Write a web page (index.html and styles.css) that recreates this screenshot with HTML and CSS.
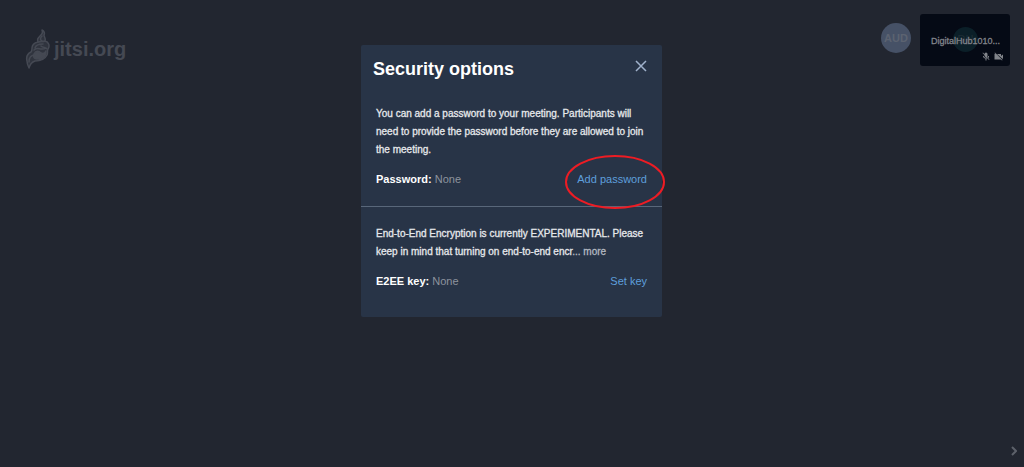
FILE: index.html
```html
<!DOCTYPE html>
<html lang="en">
<head>
    <meta charset="UTF-8">
    <meta name="viewport" content="width=device-width, initial-scale=1.0">
    <title>Jitsi Meet</title>
    <link rel="stylesheet" href="styles.css">
</head>
<body>
    <header class="topbar">
        <a class="logo" href="#">
            <svg class="logo-mark" viewBox="0 0 28 40" fill="none" stroke="currentColor" stroke-width="1.500" stroke-linejoin="round" stroke-linecap="round">
                <path fill="#30343e" d="M18 1c1 3 0 4-2 6-2 2-3 3-2 6-4 1-6 3-6 6 0 2 0 3-1 4-4 2-5 5-4 9 0 3 1 5 2 7 1-4 3-6 6-7 6 0 10-2 12-6 1-2 0-4 1-6 2-3 1-7-3-8 1-3-1-4-1-6 1-2 0-4-2-5z"/>
                <path d="M18 7c-2 2-2 4 0 5M14 13c3-1 5 0 7-1M11 19c1-4 5-4 8-4M10 21c4-4 6 1 12-2M17 17c2 2 5 1 6 3M5 33c0-5 2-7 6-7M22 24c-1 4-3 6-7 7"/>
                <path fill="currentColor" d="M10 25c2-4 5-3 7-1 2 1 4 0 5-2-1 5-5 8-9 8-3 0-4-2-3-5z"/>
            </svg>
            <span>jitsi.org</span>
        </a>
        <div class="participants">
            <div class="avatar">AUD</div>
            <div class="thumbnail">
                <div class="thumbnail-avatar">DH</div>
                <div class="thumbnail-name">DigitalHub1010...</div>
                <div class="thumbnail-status">
                    <svg width="8" height="9" viewBox="0 0 16 18" fill="currentColor">
                        <path d="M5 4a3 3 0 0 1 6 0v5l-1 1-5-5zM12 8h2c0 2 0 3-1 4l-1-1zM1 2l1-1 13 14-1 1-4-4-1 1v4H7v-4c-3 0-5-2-5-5h2c0 3 3 4 5 3L7 10 5 8V6z"/>
                    </svg>
                    <svg width="9" height="9" viewBox="0 0 18 18" fill="currentColor">
                        <path d="M6 4h8v4l4-3v9l-3-2zM1 2l1-1 15 15-1 1-2-2H1V4h2z"/>
                    </svg>
                </div>
            </div>
        </div>
    </header>

    <div class="overlay">
        <section class="dialog" role="dialog" aria-labelledby="dialog-title">
            <div class="dialog-header">
                <h1 id="dialog-title">Security options</h1>
                <button class="close" aria-label="Close">
                    <svg width="12" height="12" viewBox="0 0 12 12" fill="none" stroke="currentColor" stroke-width="1.500">
                        <path d="M1 1l10 10M11 1L1 11"/>
                    </svg>
                </button>
            </div>
            <div class="section">
                <p>You can add a password to your meeting. Participants will need to provide the password before they are allowed to join the meeting.</p>
                <div class="row">
                    <div><strong>Password:</strong> <span class="value">None</span></div>
                    <div class="action">
                        <a href="#">Add password</a>
                        <svg class="highlight" viewBox="0 0 100 56" fill="none" stroke="#ed1c24" stroke-width="2">
                            <ellipse cx="50" cy="28" rx="49" ry="26"/>
                        </svg>
                    </div>
                </div>
            </div>
            <div class="section">
                <p>End-to-End Encryption is currently EXPERIMENTAL. Please keep in mind that turning on end-to-end encr<span class="more">... more</span></p>
                <div class="row">
                    <div><strong>E2EE key:</strong> <span class="value">None</span></div>
                    <a href="#">Set key</a>
                </div>
            </div>
        </section>
    </div>

    <footer class="bottombar">
        <button class="filmstrip-toggle" aria-label="Toggle filmstrip">
            <svg width="6" height="10" viewBox="0 0 6 10" fill="none" stroke="currentColor" stroke-width="2">
                <path d="M1 1l4 4-4 4"/>
            </svg>
        </button>
    </footer>
</body>
</html>
```
FILE: styles.css
```css
* {
    box-sizing: border-box;
}
body {
    margin: 0;
    min-height: 100vh;
    display: flex;
    flex-direction: column;
    justify-content: space-between;
    background-color: #222630;
    font-family: "Liberation Sans", Arial, sans-serif;
    font-size: 11px;
}
a {
    color: #5e9fdc;
    text-decoration: none;
}
button {
    padding: 0;
    border: none;
    background: none;
    cursor: pointer;
}
svg {
    display: block;
}
.topbar {
    display: flex;
    justify-content: space-between;
    padding: 14px 14px 0 24px;
}
.logo {
    display: flex;
    align-items: center;
    gap: 2px;
    height: 40px;
    margin-top: 15px;
    color: #454953;
    font-size: 20px;
    font-weight: bold;
}
.logo-mark {
    width: 28px;
    height: 40px;
}
.participants {
    display: flex;
    gap: 9px;
}
.avatar {
    width: 30px;
    height: 30px;
    margin-top: 9px;
    border-radius: 50%;
    background-color: #465166;
    color: #5c6371;
    font-size: 11px;
    font-weight: bold;
    line-height: 30px;
    text-align: center;
}
.thumbnail {
    position: relative;
    display: flex;
    flex-direction: column;
    justify-content: flex-end;
    width: 90px;
    height: 52px;
    padding: 0 7px 5px 11px;
    border-radius: 3px;
    background-color: #050a15;
    color: #81848a;
}
.thumbnail-avatar {
    position: absolute;
    top: 13px;
    left: 33px;
    width: 25px;
    height: 25px;
    border-radius: 50%;
    background-color: #0b1f28;
    color: #1d2d35;
    line-height: 25px;
    text-align: center;
}
.thumbnail-name {
    position: relative;
    font-size: 9px;
    line-height: 12px;
    white-space: nowrap;
    -webkit-text-stroke: 0.3px currentColor;
}
.thumbnail-status {
    display: flex;
    justify-content: flex-end;
    gap: 4px;
    margin-top: 5px;
}
.overlay {
    position: absolute;
    inset: 0;
    display: flex;
    justify-content: center;
    align-items: flex-start;
    padding: 45px 1px 0 0;
}
.dialog {
    width: 301px;
    border-radius: 2px;
    background-color: #283447;
    color: #e6e8eb;
}
.dialog-header {
    display: flex;
    justify-content: space-between;
    align-items: flex-start;
    padding: 13px 15px 0 12px;
}
.dialog-header h1 {
    margin: 0;
    color: #fff;
    font-size: 18px;
    line-height: 22px;
}
.close {
    margin-top: 2px;
    color: #a0b2cc;
}
.section {
    padding: 25px 15px 18px;
}
.section + .section {
    padding: 18px 15px 27px;
    border-top: 1px solid #59677a;
}
.section p {
    margin: 0;
    font-size: 10px;
    line-height: 18px;
    -webkit-text-stroke: 0.3px currentColor;
}
.more {
    color: #b3b8c1;
}
.row {
    display: flex;
    justify-content: space-between;
    margin-top: 11px;
    line-height: 18px;
}
.section strong {
    color: #fff;
}
.value {
    color: #8d939d;
}
.action {
    position: relative;
}
.highlight {
    position: absolute;
    top: -16px;
    right: -18px;
    width: 100px;
    height: 56px;
    pointer-events: none;
}
.bottombar {
    display: flex;
    justify-content: flex-end;
    padding: 0 7px 11px;
}
.filmstrip-toggle {
    color: #5d616a;
}
```
